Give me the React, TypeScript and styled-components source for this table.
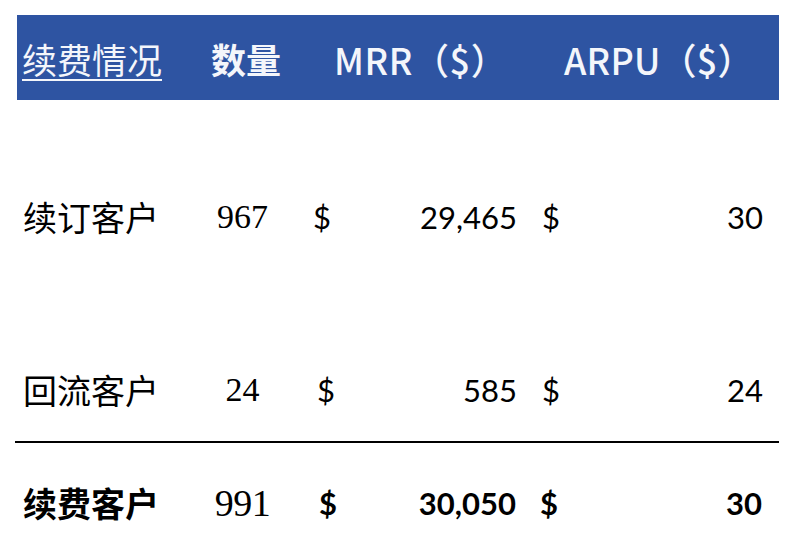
import React from "react";
import styled, { createGlobalStyle } from "styled-components";

const GlobalStyle = createGlobalStyle`
  html, body {
    margin: 0;
    padding: 0;
    background: #ffffff;
    overflow: hidden;
  }
  body {
    font-family: "Noto Sans CJK SC", "Noto Sans", sans-serif;
    color: #000000;
  }
`;

const Page = styled.div`
  width: 764px;
  margin-left: 15px;
  padding-top: 15px;
`;

const HeaderBar = styled.div`
  display: grid;
  grid-template-columns: 178px 95px 230px 259px;
  height: 85px;
  margin-left: 2px;
  align-items: center;
  background: #2e54a2;
  color: #f4f6fb;
  font-family: "Noto Sans CJK SC", "Noto Sans", sans-serif;
  line-height: 42px;
  box-sizing: border-box;
  padding-top: 3px;
`;

const HeadCell = styled.div<{ $pl: number; $size: number; $weight?: number; $underline?: boolean; $ls?: number }>`
  padding-left: ${(p) => p.$pl}px;
  font-size: ${(p) => p.$size}px;
  font-weight: ${(p) => p.$weight ?? 400};
  letter-spacing: ${(p) => p.$ls ?? 0}px;
  text-decoration: ${(p) => (p.$underline ? "underline" : "none")};
  text-decoration-thickness: 2px;
  text-underline-offset: 5px;
  white-space: nowrap;
`;

const Row = styled.div<{ $pt: number; $pb?: number; $rule?: boolean }>`
  display: grid;
  grid-template-columns: 180px 95px 230px 259px;
  align-items: center;
  padding-top: ${(p) => p.$pt}px;
  padding-bottom: ${(p) => p.$pb ?? 0}px;
  border-bottom: ${(p) => (p.$rule ? "2px solid #000" : "none")};
  height: 40px;
  box-sizing: content-box;
`;

const Label = styled.div<{ $bold?: boolean }>`
  padding-left: 8px;
  font-family: "Noto Sans CJK SC", "Noto Sans", sans-serif;
  font-size: 34px;
  line-height: 40px;
  font-weight: ${(p) => (p.$bold ? 700 : 400)};
  white-space: nowrap;
`;

const Qty = styled.div<{ $big?: boolean }>`
  text-align: center;
  font-family: "Liberation Serif", "Times New Roman", serif;
  font-size: ${(p) => (p.$big ? 38 : 34)}px;
  line-height: 40px;
  letter-spacing: ${(p) => (p.$big ? "-0.5px" : "0")};
`;

const Money = styled.div<{ $pl: number; $pr: number; $bold?: boolean }>`
  display: flex;
  justify-content: space-between;
  align-items: baseline;
  padding-left: ${(p) => p.$pl}px;
  padding-right: ${(p) => p.$pr}px;
  font-family: Lato, "Open Sans", sans-serif;
  font-size: 31px;
  line-height: 40px;
  font-weight: ${(p) => (p.$bold ? 700 : 400)};
`;

type Item = {
  label: string;
  qty: string;
  mrr: string;
  arpu: string;
  dollarPad: number;
};

const rows: Item[] = [
  { label: "续订客户", qty: "967", mrr: "29,465", arpu: "30", dollarPad: 23 },
  { label: "回流客户", qty: "24", mrr: "585", arpu: "24", dollarPad: 27 },
];

const total: Item = { label: "续费客户", qty: "991", mrr: "30,050", arpu: "30", dollarPad: 29 };

export default function App() {
  return (
    <>
      <GlobalStyle />
      <Page>
        <HeaderBar>
          <HeadCell $pl={5} $size={35} $underline>
            续费情况
          </HeadCell>
          <HeadCell $pl={16} $size={35} $weight={700}>
            数量
          </HeadCell>
          <HeadCell $pl={44} $size={36} $weight={500} $ls={0.6}>
            MRR（$）
          </HeadCell>
          <HeadCell $pl={44} $size={36} $weight={500} $ls={0.2}>
            ARPU（$）
          </HeadCell>
        </HeaderBar>

        <Row $pt={97}>
          <Label>{rows[0].label}</Label>
          <Qty>{rows[0].qty}</Qty>
          <Money $pl={rows[0].dollarPad} $pr={3}>
            <span>$</span>
            <span>{rows[0].mrr}</span>
          </Money>
          <Money $pl={22} $pr={16}>
            <span>$</span>
            <span>{rows[0].arpu}</span>
          </Money>
        </Row>

        <Row $pt={133} $pb={31} $rule>
          <Label>{rows[1].label}</Label>
          <Qty>{rows[1].qty}</Qty>
          <Money $pl={rows[1].dollarPad} $pr={3}>
            <span>$</span>
            <span>{rows[1].mrr}</span>
          </Money>
          <Money $pl={22} $pr={16}>
            <span>$</span>
            <span>{rows[1].arpu}</span>
          </Money>
        </Row>

        <Row $pt={40}>
          <Label $bold>{total.label}</Label>
          <Qty $big>{total.qty}</Qty>
          <Money $pl={total.dollarPad} $pr={4} $bold>
            <span>$</span>
            <span>{total.mrr}</span>
          </Money>
          <Money $pl={20} $pr={17} $bold>
            <span>$</span>
            <span>{total.arpu}</span>
          </Money>
        </Row>
      </Page>
    </>
  );
}
